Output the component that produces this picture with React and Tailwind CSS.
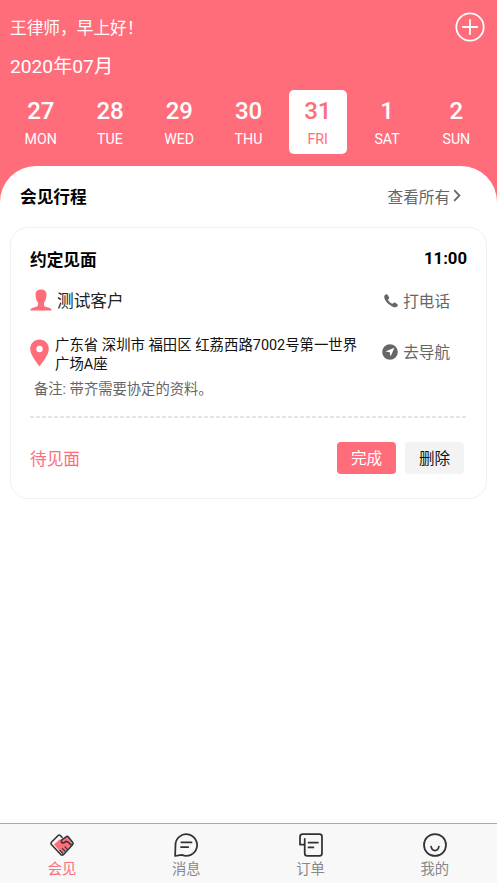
const days = [
  { date: '27', name: 'MON' },
  { date: '28', name: 'TUE' },
  { date: '29', name: 'WED' },
  { date: '30', name: 'THU' },
  { date: '31', name: 'FRI', active: true },
  { date: '1', name: 'SAT' },
  { date: '2', name: 'SUN' },
];

const tabs = [
  { label: '会见', icon: HandshakeIcon, active: true },
  { label: '消息', icon: MessageIcon },
  { label: '订单', icon: OrderIcon },
  { label: '我的', icon: SmileIcon },
];

export default function App() {
  return (
    <div className="flex h-screen w-full flex-col overflow-hidden bg-[#ff6d7b] font-['Roboto','Noto_Sans_CJK_SC',sans-serif] text-black">
      {/* Header */}
      <header className="flex h-[83px] shrink-0 items-start justify-between pl-2.5 pr-3 text-white">
        <div className="pt-[17px]">
          <p className="text-[16.7px] leading-6">王律师，早上好！</p>
          <h1 className="mt-[14px] text-[19.2px] leading-6">2020年07月</h1>
        </div>
        <button type="button" aria-label="add" className="mt-3">
          <svg width="30" height="30" viewBox="0 0 30 30" fill="none" stroke="white" strokeWidth="1.8" strokeLinecap="round">
            <circle cx="15" cy="15" r="13.7" />
            <path d="M15 7.8V22.2M7.8 15H22.2" />
          </svg>
        </button>
      </header>

      {/* Week */}
      <div className="flex h-[82.5px] shrink-0 px-1.5 pt-[7px]">
        {days.map(day => (
          <div key={day.name} className="flex flex-1 justify-center">
            <button
              type="button"
              className={`flex h-16 w-[58px] flex-col items-center rounded-[5px] pt-1.5 ${
                day.active ? 'bg-white text-[#ff6d7b]' : 'text-white'
              }`}
            >
              <span className="text-[24px] font-medium leading-[30px] tracking-[-0.2px]">{day.date}</span>
              <span className="mt-1 text-[14.2px] leading-[18px]">{day.name}</span>
            </button>
          </div>
        ))}
      </div>

      <main className="min-h-0 flex-1 rounded-t-[36px] bg-white px-2.5">
        <div className="flex h-[61.5px] items-center justify-between pl-2.5 pr-[26px] pt-[3px]">
          <h2 className="text-[16.7px] font-bold leading-6">会见行程</h2>
          <a className="flex items-center text-[15.6px] leading-6 text-[#666]">
            查看所有
            <svg className="mb-1 ml-[3px]" width="8" height="13" viewBox="0 0 8 13" fill="none" stroke="currentColor" strokeWidth="1.8">
              <path d="M1.2 1.2L6.4 6.5L1.2 11.8" />
            </svg>
          </a>
        </div>

        <section className="h-[272px] rounded-[18px] border border-[#f0f0f0] px-[19px] pt-5">
          <div className="flex items-start justify-between">
            <h3 className="pt-px text-[16.7px] font-bold leading-6">约定见面</h3>
            <span className="-mt-px text-[16.7px] font-bold leading-6">11:00</span>
          </div>

          <div className="mt-4 flex items-center justify-between pr-[17px]">
            <div className="flex items-center gap-[5px]">
              <PersonIcon />
              <span className="text-[16.7px] leading-6 text-[#222]">测试客户</span>
            </div>
            <a className="flex items-center gap-[5px] text-[15.6px] leading-6 text-[#666]">
              <PhoneIcon />
              打电话
            </a>
          </div>

          <div className="mt-[21px] flex items-center justify-between pr-[17px]">
            <div className="flex items-center gap-1.5">
              <PinIcon />
              <p className="w-[310px] pt-px text-[14.4px] leading-[19px] text-[#111]">
                广东省 深圳市 福田区 红荔西路7002号第一世界广场A座
              </p>
            </div>
            <a className="mb-[3px] flex items-center gap-[5px] text-[15.6px] leading-6 text-[#666]">
              <NavigateIcon />
              去导航
            </a>
          </div>
          <p className="mt-[5px] pl-1 text-[14.3px] leading-5 text-[#666]">备注: 带齐需要协定的资料。</p>

          <svg className="mt-[17px] block h-0.5 w-full">
            <line x1="0" y1="1" x2="100%" y2="1" stroke="#dcdcdc" strokeWidth="1.6" strokeDasharray="4 2" />
          </svg>

          <div className="mt-6 flex items-center justify-between pr-[3px]">
            <span className="pt-[3px] text-[16.7px] leading-6 text-[#ff6d7b]">待见面</span>
            <div className="flex gap-[9px]">
              <button type="button" className="h-8 w-[59px] rounded-[4px] bg-[#ff6d7b] pt-px text-[15.6px] leading-6 text-white">完成</button>
              <button type="button" className="h-8 w-[59px] rounded-[4px] bg-[#f3f3f3] pt-px text-[15.6px] leading-6 text-[#111]">删除</button>
            </div>
          </div>
        </section>
      </main>

      {/* Tab bar */}
      <nav className="flex h-[60px] shrink-0 border-t border-[#aaa] bg-[#f8f8f8]">
        {tabs.map(({ label, icon: Icon, active }) => (
          <button
            key={label}
            type="button"
            className={`flex flex-1 flex-col items-center pt-[9px] text-[14.3px] ${active ? 'text-[#ff6d7b]' : 'text-[#888]'}`}
          >
            <Icon />
            <span className="mt-0.5 leading-5">{label}</span>
          </button>
        ))}
      </nav>
    </div>
  );
}

function PersonIcon() {
  return (
    <svg className="mb-[3px]" width="22" height="22" viewBox="0 0 22 22" fill="#ff6d7b">
      <path d="M11 .4C7.5.4 5.5 2 5.5 5.200c0 1.500.2 2.500.4 3.500.3 2.100 1 3.800 2.100 5v2.400c0 1.500-2 2-4.200 2.500C1.500 19.200.3 20 .2 21.600h21.600c-.1-1.600-1.300-2.400-3.600-3C16 18.100 14 17.600 14 16.100v-2.400c1.100-1.200 1.800-2.900 2.100-5 .2-1 .4-2 .4-3.500C16.500 2 14.500.4 11 .4z" />
    </svg>
  );
}

function PinIcon() {
  return (
    <svg className="mb-1" width="19" height="28" viewBox="0 0 19 28">
      <path fill="#ff6d7b" fillRule="evenodd" d="M9.5.5C4.300.5.2 4.600.2 9.800c0 5.800 5 11.800 9.300 17.700 4.300-5.900 9.300-11.900 9.300-17.700C18.800 4.600 14.700.5 9.500.5zm0 6.300a3.200 3.200 0 1 1 0 6.400 3.200 3.200 0 0 1 0-6.400z" />
    </svg>
  );
}

function PhoneIcon() {
  return (
    <svg className="mb-0.5" width="14" height="14" viewBox="0 0 14 14" fill="#666">
      <path d="M.6 1.500C1.400.4 2.800-.1 3.700.9l1.300 2.300c.4.8.1 1.400-.6 1.900-.5.4-.4.8 0 1.300.8 1.200 1.900 2.200 3.200 3 .7.4 1.100.4 1.500-.1.6-.7 1.200-.9 2-.5l2.100 1.200c1 .8.600 2.100-.4 2.800-1.300 1-3.800.5-6.900-1.800C3.400 9.200 1.300 6.800.5 4.400.1 3.200.1 2.300.6 1.500z" />
    </svg>
  );
}

function NavigateIcon() {
  return (
    <svg className="mb-0.5" width="16" height="16" viewBox="0 0 16 16">
      <circle cx="8" cy="8" r="7.8" fill="#666" />
      <path d="M12.400 3.800L3.500 7.400L7.800 8.200L8.600 12.400Z" fill="white" />
    </svg>
  );
}

function HandshakeIcon() {
  return (
    <svg width="26" height="24" viewBox="0 0 26 24" fill="none" strokeLinecap="round" strokeLinejoin="round">
      <path d="M5 11.500L10.500 6.500L12.500 7L18 3.500L23.500 10.500L13.500 21.500Z" fill="#ff6d7b" />
      <path d="M13 4.300L11.300 2.500Q10.200 1.400 9.100 2.500L2.400 9.300Q1.400 10.400 2.400 11.500L12 21.700Q13.200 22.700 14.400 21.700L23.500 11.700Q24.700 10.500 23.600 9.300L19.300 3.900Q18.200 2.800 17.100 3.900L12.700 6.800Q11.700 9.200 13.600 9.900Q15.500 10.200 17 8.200Q19 8.700 22.300 12" stroke="#333" strokeWidth="1.6" />
      <path d="M11 17.500L13.600 20.100M13.500 15.700L16 18.200M16 13.900L18.400 16.300" stroke="#333" strokeWidth="1.2" />
    </svg>
  );
}

function MessageIcon() {
  return (
    <svg width="24" height="24" viewBox="0 0 26 26" fill="none" stroke="#333" strokeWidth="1.900" strokeLinecap="round" strokeLinejoin="round">
      <path d="M1.200 24.900L1.600 13A11.700 11.700 0 1 1 8.500 23.700Q5 24.100 1.200 24.900Z" />
      <path d="M8 10.200H19M7.500 15.200H15.500" />
    </svg>
  );
}

function OrderIcon() {
  return (
    <svg width="24" height="24" viewBox="0 0 26 26" fill="none" stroke="#333" strokeWidth="1.900" strokeLinecap="round" strokeLinejoin="round">
      <path d="M6.200 6.500V22Q6.200 24.900 8.900 24.900H22.200Q24.900 24.900 24.900 22V4Q24.900 1.100 22.200 1.100H3.900Q1.100 1.100 1.100 4V12.600H6.200" />
      <path d="M10.300 10.300H20.500M10.300 15.600H15.600" />
    </svg>
  );
}

function SmileIcon() {
  return (
    <svg width="24" height="24" viewBox="0 0 26 26" fill="none" stroke="#333" strokeWidth="1.900" strokeLinecap="round">
      <circle cx="13" cy="13" r="11.900" />
      <path d="M8.800 14.800C10.100 20.400 15.900 20.400 17.200 14.800" />
    </svg>
  );
}
